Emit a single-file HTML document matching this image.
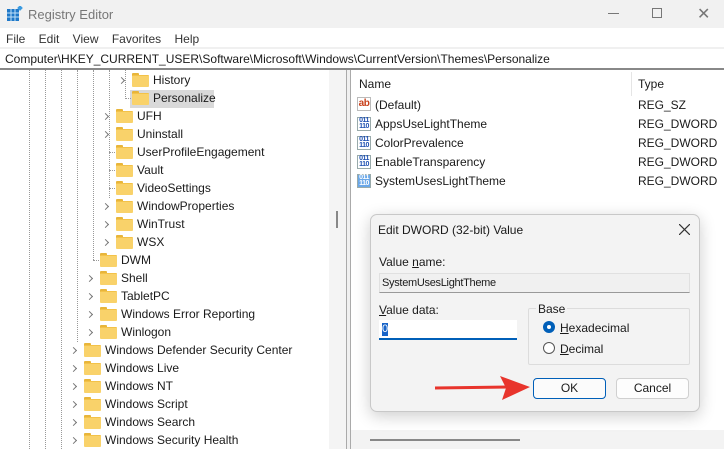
<!DOCTYPE html><html><head><style>
*{margin:0;padding:0;box-sizing:border-box}
body{width:724px;height:449px;overflow:hidden;background:#fff;font-family:"Liberation Sans",sans-serif;font-size:12px;color:#1a1a1a;position:relative}
.a{position:absolute;white-space:nowrap}
.f{position:absolute;width:17px;height:13px}
.f:before{content:"";position:absolute;left:0;top:0;width:7px;height:3px;background:#e8b53a;border-radius:1px 1px 0 0}
.f:after{content:"";position:absolute;left:0;top:2px;width:17px;height:11px;background:#f9d26a;border-top:1px solid #f3c248;border-radius:1px}
.dl{position:absolute;width:0;border-left:1px dotted #999}
.ch{position:absolute;width:5px;height:5px;border-right:1px solid #777;border-top:1px solid #777;transform:rotate(45deg)}
.ic{position:absolute;width:14px;height:14px;border:1px solid #9aa;background:#fff;font-size:7px;line-height:6px;color:#1d4fb0;font-weight:bold;text-align:center;letter-spacing:-.5px}
</style></head><body>
<div class="a" style="left:0;top:0;width:724px;height:28px;background:#f1f1f1"></div>
<svg class="a" style="left:7px;top:6px" width="16" height="16"><rect x="0" y="3" width="12" height="12" fill="#1f78c8"/><path d="M4 3v12M8 3v12M0 7h12M0 11h12" stroke="#bfe0f8" stroke-width="1"/><rect x="11" y="0" width="4" height="4" fill="#3a9ae0" transform="rotate(45 13 2)"/></svg>
<div class="a" style="left:28px;top:7px;font-size:13px;color:#777">Registry Editor</div>
<div class="a" style="left:608px;top:13px;width:11px;border-top:1px solid #777"></div>
<div class="a" style="left:652px;top:8px;width:10px;height:10px;border:1px solid #777"></div>
<div class="a" style="left:697px;top:4px;font-size:16px;color:#777">✕</div>
<div class="a" style="left:0;top:28px;width:724px;height:20px;background:#fff"></div>
<div class="a" style="left:6px;top:32px;color:#333">File&nbsp;&nbsp;&nbsp;&nbsp;Edit&nbsp;&nbsp;&nbsp;&nbsp;View&nbsp;&nbsp;&nbsp;&nbsp;Favorites&nbsp;&nbsp;&nbsp;&nbsp;Help</div>
<div class="a" style="left:0;top:47px;width:724px;height:2px;background:#f0f0f0"></div>
<div class="a" style="left:5px;top:52px">Computer\HKEY_CURRENT_USER\Software\Microsoft\Windows\CurrentVersion\Themes\Personalize</div>
<div class="a" style="left:0;top:68px;width:724px;height:2px;background:#888"></div>
<!-- scrollbar -->
<div class="a" style="left:329px;top:70px;width:17px;height:379px;background:#f4f4f4"></div>
<div class="a" style="left:336px;top:211px;width:2px;height:17px;background:#888"></div>
<div class="a" style="left:346px;top:70px;width:5px;height:379px;background:#f0f0f0;border-left:1px solid #aaa;border-right:1px solid #aaa"></div>
<!-- tree lines -->
<div class="dl" style="left:29px;top:70px;height:379px"></div>
<div class="dl" style="left:45px;top:70px;height:379px"></div>
<div class="dl" style="left:61px;top:70px;height:379px"></div>
<div class="dl" style="left:77px;top:70px;height:272px"></div>
<div class="dl" style="left:93px;top:70px;height:190px"></div>
<div class="dl" style="left:109px;top:70px;height:128px"></div>
<div class="dl" style="left:125px;top:70px;height:29px"></div>
<div class="a" style="left:125px;top:98px;width:6px;border-top:1px dotted #999"></div>
<div class="a" style="left:130px;top:90px;width:84px;height:18px;background:#d9d9d9"></div>
<div id="tree"></div>
<script>
var rows=[[132,80,'History',1],[132,98,'Personalize',0],[116,116,'UFH',1],[116,134,'Uninstall',1],[116,152,'UserProfileEngagement',0],[116,170,'Vault',0],[116,188,'VideoSettings',0],[116,206,'WindowProperties',1],[116,224,'WinTrust',1],[116,242,'WSX',1],[100,260,'DWM',0],[100,278,'Shell',1],[100,296,'TabletPC',1],[100,314,'Windows Error Reporting',1],[100,332,'Winlogon',1],[84,350,'Windows Defender Security Center',1],[84,368,'Windows Live',1],[84,386,'Windows NT',1],[84,404,'Windows Script',1],[84,422,'Windows Search',1],[84,440,'Windows Security Health',1]];
var h='';rows.forEach(function(r){var x=r[0],y=r[1];
h+='<div class="f" style="left:'+x+'px;top:'+(y-7)+'px"></div><div class="a" style="left:'+(x+21)+'px;top:'+(y-7)+'px">'+r[2]+'</div>';
if(r[3])h+='<div class="ch" style="left:'+(x-13)+'px;top:'+(y-2)+'px"></div>';
else h+='<div class="a" style="left:'+(x-7)+'px;top:'+y+'px;width:6px;border-top:1px dotted #999"></div>';});
document.getElementById('tree').innerHTML=h;
</script>
<!-- right pane -->
<div class="a" style="left:359px;top:77px">Name</div>
<div class="a" style="left:631px;top:72px;height:24px;border-left:1px solid #e5e5e5"></div>
<div class="a" style="left:638px;top:77px">Type</div>
<div class="ic" style="left:357px;top:97px;color:#c8401a;font-size:10px;line-height:11px;border-color:#bbb">ab</div>
<div class="a" style="left:375px;top:98px">(Default)</div><div class="a" style="left:638px;top:98px">REG_SZ</div>
<div class="ic" style="left:357px;top:117px">011<br>110</div>
<div class="a" style="left:375px;top:117px">AppsUseLightTheme</div><div class="a" style="left:638px;top:117px">REG_DWORD</div>
<div class="ic" style="left:357px;top:136px">011<br>110</div>
<div class="a" style="left:375px;top:136px">ColorPrevalence</div><div class="a" style="left:638px;top:136px">REG_DWORD</div>
<div class="ic" style="left:357px;top:155px">011<br>110</div>
<div class="a" style="left:375px;top:155px">EnableTransparency</div><div class="a" style="left:638px;top:155px">REG_DWORD</div>
<div class="ic" style="left:357px;top:174px;background:#6aa7e8;color:#fff">011<br>110</div>
<div class="a" style="left:375px;top:174px">SystemUsesLightTheme</div><div class="a" style="left:638px;top:174px">REG_DWORD</div>
<div class="a" style="left:351px;top:430px;width:373px;height:19px;background:#f3f3f3"></div>
<div class="a" style="left:370px;top:439px;width:150px;height:2px;background:#888"></div>
<!-- dialog -->
<div class="a" style="left:370px;top:214px;width:330px;height:198px;background:#f3f3f3;border:1px solid #c8c8c8;border-radius:7px;box-shadow:0 4px 16px rgba(0,0,0,.2)"></div>
<div class="a" style="left:378px;top:223px">Edit DWORD (32-bit) Value</div>
<svg class="a" style="left:679px;top:224px" width="11" height="11"><path d="M0 0L11 11M11 0L0 11" stroke="#333" stroke-width="1.2"/></svg>
<div class="a" style="left:379px;top:255px">Value <u>n</u>ame:</div>
<div class="a" style="left:379px;top:273px;width:311px;height:20px;background:#f0f0f0;border:1px solid #e0e0e0;border-bottom-color:#999"></div>
<div class="a" style="left:382px;top:277px;font-size:11px;letter-spacing:-.3px">SystemUsesLightTheme</div>
<div class="a" style="left:379px;top:303px"><u>V</u>alue data:</div>
<div class="a" style="left:379px;top:320px;width:138px;height:20px;background:#fff;border-bottom:2px solid #005fb8"></div>
<div class="a" style="left:382px;top:323px;width:6px;height:13px;background:#1864c8;color:#fff;font-size:11px;line-height:13px">0</div>
<div class="a" style="left:528px;top:308px;width:162px;height:57px;border:1px solid #dcdcdc;border-radius:2px"></div>
<div class="a" style="left:536px;top:302px;background:#f3f3f3;padding:0 2px">Base</div>
<div class="a" style="left:543px;top:321px;width:12px;height:12px;border-radius:50%;background:#005fb8"><div class="a" style="left:4px;top:4px;width:4px;height:4px;border-radius:50%;background:#fff"></div></div>
<div class="a" style="left:560px;top:321px"><u>H</u>exadecimal</div>
<div class="a" style="left:543px;top:342px;width:12px;height:12px;border-radius:50%;border:1px solid #555;background:#fff"></div>
<div class="a" style="left:560px;top:342px"><u>D</u>ecimal</div>
<div class="a" style="left:533px;top:378px;width:73px;height:21px;background:#fbfbfb;border:1px solid #005fb8;border-radius:4px;text-align:center;line-height:19px">OK</div>
<div class="a" style="left:616px;top:378px;width:73px;height:21px;background:#fdfdfd;border:1px solid #d0d0d0;border-radius:4px;text-align:center;line-height:19px">Cancel</div>
<svg class="a" style="left:430px;top:374px" width="102" height="28"><path d="M5 14L80 13" stroke="#e8342c" stroke-width="3"/><path d="M70 2L100 13L72 26L76 14Z" fill="#e8342c"/></svg>
</body></html>
